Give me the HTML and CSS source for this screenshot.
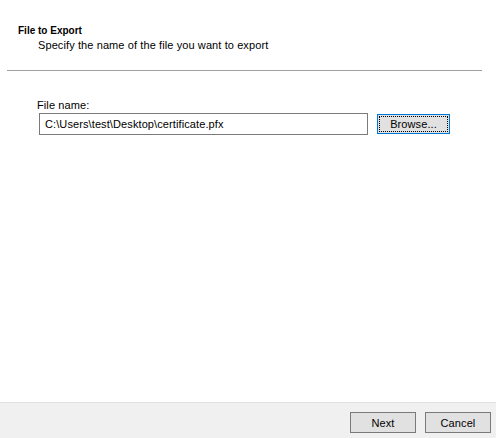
FILE: index.html
```html
<!DOCTYPE html>
<html lang="en">
<head>
    <meta charset="UTF-8">
    <title>Certificate Export Wizard</title>
    <link rel="stylesheet" href="styles.css">
</head>
<body>
    <div class="wizard">
        <!-- page header -->
        <div class="wizard-header">
            <div class="wizard-title">File to Export</div>
            <div class="wizard-subtitle">Specify the name of the file you want to export</div>
        </div>
        <div class="wizard-rule"></div>

        <!-- page body -->
        <div class="wizard-body">
            <label class="field-label" for="file-name">File name:</label>
            <div class="field-row">
                <input id="file-name" class="text-input" type="text" value="C:\Users\test\Desktop\certificate.pfx">
                <button class="btn btn-browse"><span class="focus-rect">Browse...</span></button>
            </div>
        </div>

        <!-- buttons -->
        <div class="wizard-footer">
            <button class="btn">Next</button>
            <button class="btn">Cancel</button>
        </div>
    </div>
</body>
</html>
```

FILE: styles.css
```css
html, body {
    margin: 0;
    padding: 0;
    background: #ffffff;
}

body {
    font-family: "Liberation Sans", "DejaVu Sans", sans-serif;
    font-size: 11px;
    letter-spacing: 0.1px;
    color: #000000;
}

.wizard {
    width: 496px;
    height: 438px;
    display: flex;
    flex-direction: column;
}

/* header */
.wizard-header {
    padding: 24px 0 0 18px;
}

.wizard-title {
    font-weight: bold;
    font-size: 10px;
    letter-spacing: 0;
    line-height: 14px;
}

.wizard-subtitle {
    padding-left: 20px;
    line-height: 15px;
}

.wizard-rule {
    height: 1px;
    margin: 17px 14px 0 7px;
    background: #a0a0a0;
}

/* body */
.wizard-body {
    flex: 1;
    padding: 27px 0 0 37px;
}

.field-label {
    display: block;
    line-height: 15px;
}

.field-row {
    display: flex;
    align-items: center;
    padding-left: 2px;
}

.text-input {
    width: 329px;
    height: 22px;
    box-sizing: border-box;
    border: 1px solid #7a7a7a;
    padding: 0 5px;
    font: inherit;
    letter-spacing: inherit;
    color: #000000;
    outline: none;
}

/* buttons */
.btn {
    height: 21px;
    width: 66px;
    box-sizing: border-box;
    border: 1px solid #7a7a7a;
    background: #e1e1e1;
    font: inherit;
    letter-spacing: inherit;
    color: #000000;
    padding: 0;
    cursor: pointer;
}

.btn-browse {
    margin-left: 9px;
    width: 73px;
    height: 20px;
    border-color: #0078d7;
    padding: 1px;
}

.focus-rect {
    display: flex;
    align-items: center;
    justify-content: center;
    height: 100%;
    box-sizing: border-box;
    border: 1px dotted #000000;
}

.wizard-footer {
    height: 36px;
    box-sizing: border-box;
    border-top: 1px solid #dfdfdf;
    background: #f0f0f0;
    display: flex;
    justify-content: flex-end;
    gap: 9px;
    padding: 9px 5px 0 0;
}
```
